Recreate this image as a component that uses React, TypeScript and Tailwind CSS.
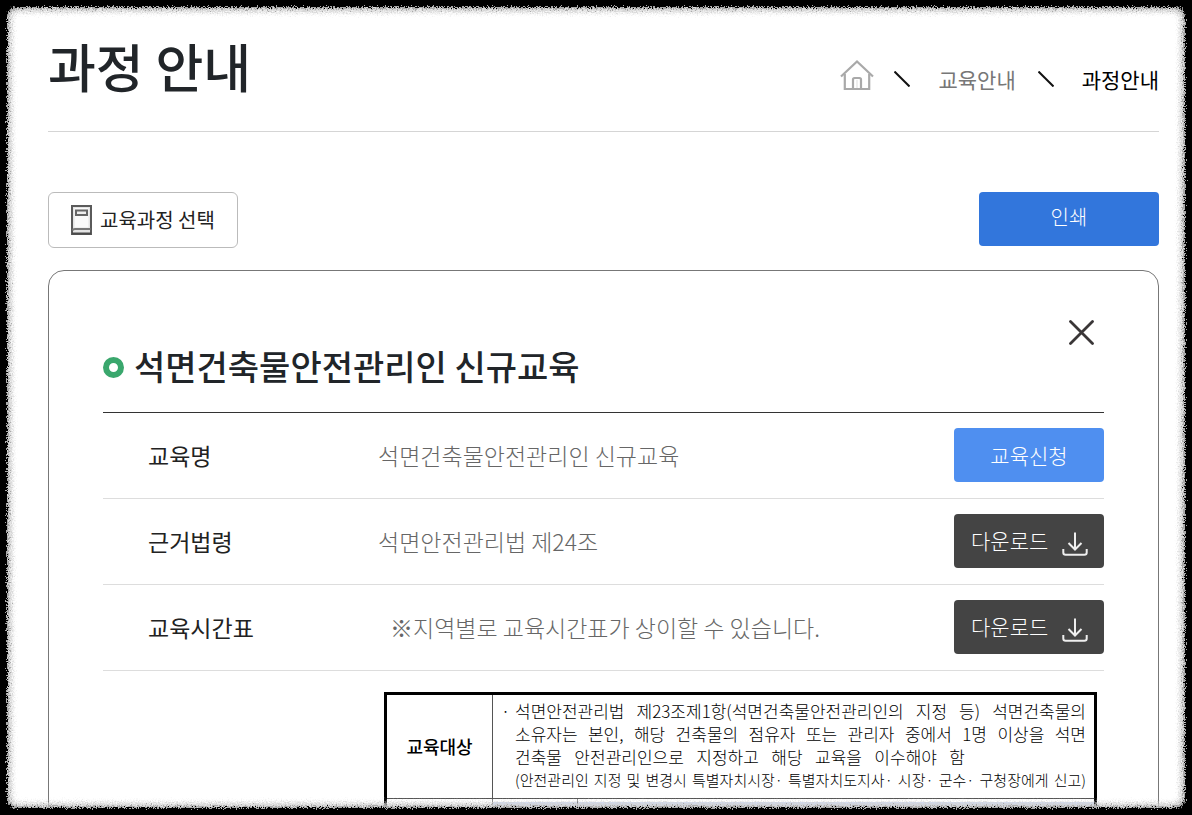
import React from "react";

function HomeIcon() {
  return (
    <svg width="34" height="32" viewBox="0 0 34 32" fill="none" stroke="#a9a9a9" strokeWidth="2.200">
      <path d="M1 17.500 L17 2.500 L33 17.500" />
      <path d="M4.800 15 V30 H29.200 V15" />
      <path d="M13 30 V20.500 Q13 19 14.500 19 H19.500 Q21 19 21 20.500 V30" />
      <path d="M17 21 V29" strokeWidth="1" opacity="0.4" />
    </svg>
  );
}

function Separator() {
  return (
    <svg width="16" height="16" viewBox="0 0 16 16" stroke="#111" strokeWidth="2" aria-hidden="true">
      <path d="M0.500 0.500 L15.500 15.500" />
    </svg>
  );
}

function BookIcon() {
  return (
    <svg width="21" height="30" viewBox="0 0 21 30" fill="none" aria-hidden="true">
      <rect x="1" y="1" width="19" height="28" fill="#e4e4e4" stroke="#5a5a5a" strokeWidth="2" />
      <rect x="3.500" y="3" width="14" height="19.500" fill="#fafafa" />
      <rect x="5" y="5.500" width="11" height="4.500" fill="#eee" stroke="#666" strokeWidth="2" />
      <path d="M1.500 25.500 Q2 24 4 24 H19.500" stroke="#777" strokeWidth="2" />
      <path d="M1 28.500 H20" stroke="#4a4a4a" strokeWidth="2" />
    </svg>
  );
}

function DownloadIcon() {
  return (
    <svg width="26" height="24" viewBox="0 0 26 24" fill="none" stroke="#eeeeee" strokeWidth="2" aria-hidden="true">
      <path d="M13 0.500 V17" />
      <path d="M6.500 11 L13 17.500 L19.500 11" />
      <path d="M1.300 17 V20.500 Q1.300 22.700 3.600 22.700 H22.400 Q24.700 22.700 24.700 20.500 V17" />
    </svg>
  );
}

function DownloadButton() {
  return (
    <button type="button" className="flex h-[54px] w-[150px] shrink-0 items-center rounded bg-[#444444] pr-4 pb-[2px] pl-[17px] text-[21px] leading-8 font-light text-white">
      <span className="flex-1 text-left whitespace-nowrap">다운로드</span>
      <span className="pt-2">
        <DownloadIcon />
      </span>
    </button>
  );
}

type RowProps = { label: string; children: React.ReactNode; indent?: boolean; action: React.ReactNode };

function Row({ label, children, indent, action }: RowProps) {
  return (
    <div className="flex items-center border-b border-[#dddddd] pt-[15px] pb-4">
      <dt className="w-[275px] shrink-0 pl-[45px] text-[23px] leading-8 text-[#222222]">{label}</dt>
      <dd className="flex flex-1 items-center justify-between text-[23px] leading-8 font-light text-[#666666]">
        <span className={indent ? "pl-3" : ""}>{children}</span>
        {action}
      </dd>
    </div>
  );
}

function PaperEdge() {
  return (
    <div className="pointer-events-none absolute inset-0 overflow-hidden" aria-hidden="true">
      <svg width="0" height="0" className="absolute">
        <filter id="rough" x="0" y="0" width="100%" height="100%">
          <feTurbulence type="fractalNoise" baseFrequency="0.8" numOctaves="2" seed="4" result="n" />
          <feDisplacementMap in="SourceGraphic" in2="n" scale="8" xChannelSelector="R" yChannelSelector="G" />
        </filter>
        <filter id="grain" x="0" y="0" width="100%" height="100%">
          <feTurbulence type="fractalNoise" baseFrequency="0.8" numOctaves="2" seed="9" result="n" />
          <feDisplacementMap in="SourceGraphic" in2="n" scale="10" xChannelSelector="R" yChannelSelector="G" />
        </filter>
      </svg>
      <div className="absolute -inset-5 rounded-[38px] border-[29px] border-[#aaaaaa] shadow-[inset_0_0_4px_3px_#d0d0d0] [filter:url(#grain)]" />
      <div className="absolute -inset-5 rounded-[36px] border-[27px] border-black [filter:url(#rough)]" />
    </div>
  );
}

export default function App() {
  return (
    <div className="relative h-screen overflow-hidden bg-white font-['Noto_Sans_CJK_KR','Noto_Sans',sans-serif]">
      <div className="pr-[33px] pl-12">
        <header className="flex h-[132px] items-center justify-between border-b border-[#d5d5d5] pb-1">
          <h1 className="pt-1 text-[52px] leading-[64px] font-medium text-[#212529]">과정 안내</h1>
          <nav className="flex items-center pt-[30px] text-[21px] leading-8">
            <a href="#home" aria-label="홈" className="pb-[7px]">
              <HomeIcon />
            </a>
            <span className="ml-5">
              <Separator />
            </span>
            <a href="#education" className="ml-7 text-[#777777]">
              교육안내
            </a>
            <span className="ml-[22px]">
              <Separator />
            </span>
            <a href="#course" className="ml-7 text-black">
              과정안내
            </a>
          </nav>
        </header>

        <div className="mt-[60px] flex items-start justify-between">
          <button type="button" className="flex h-14 w-[190px] items-center gap-2 rounded-md border border-[#bbbbbb] pl-[22px] text-[20px] leading-8 text-[#222222]">
            <BookIcon />
            교육과정 선택
          </button>
          <button type="button" className="h-[54px] w-[180px] rounded bg-[#3276dc] pb-1 text-[20px] leading-8 font-light text-white">
            인쇄
          </button>
        </div>

        <main className="mt-[22px] rounded-2xl border border-[#777777] px-[54px] pb-10">
          <div className="flex h-[142px] items-start justify-between border-b border-[#333333]">
            <h2 className="flex items-center gap-[10px] pt-[70px] text-[34px] leading-[50px] font-medium text-[#212529]">
              <span className="mt-[2px] size-[21px] rounded-full border-[6px] border-[#3aa76d]" />
              석면건축물안전관리인 신규교육
            </h2>
            <button type="button" aria-label="닫기" className="mt-[49px] mr-[10px]">
              <svg width="25" height="25" viewBox="0 0 25 25" stroke="#3a3637" strokeWidth="2.800" strokeLinecap="round">
                <path d="M1.500 1.500 L23.500 23.500 M23.500 1.500 L1.500 23.500" />
              </svg>
            </button>
          </div>

          <dl>
            <Row
              label="교육명"
              action={
                <button type="button" className="h-[54px] w-[150px] shrink-0 rounded bg-[#4f8ff0] text-[21px] leading-8 font-light text-white">
                  교육신청
                </button>
              }
            >
              석면건축물안전관리인 신규교육
            </Row>
            <Row label="근거법령" action={<DownloadButton />}>
              석면안전관리법 제24조
            </Row>
            <Row label="교육시간표" indent action={<DownloadButton />}>
              ※지역별로 교육시간표가 상이할 수 있습니다.
            </Row>
          </dl>

          <div className="pt-[21px] pr-[7px] pl-[281px]">
            <table className="w-full table-fixed border-collapse border-[3px] border-black text-[17px] leading-[23px] text-black">
              <colgroup>
                <col className="w-[107px]" />
                <col className="w-[85px]" />
                <col />
              </colgroup>
              <tbody>
                <tr>
                  <th scope="row" className="border-r border-b border-[#555555] text-center text-[18px] font-medium">
                    교육대상
                  </th>
                  <td colSpan={2} className="border-b border-[#555555] pt-1 pr-2 pb-[7px] pl-2 font-light">
                    <div className="flex">
                      <span className="w-[14px] shrink-0">·</span>
                      <div className="min-w-0 flex-1 whitespace-nowrap [text-align-last:justify]">
                        <p>석면안전관리법 제23조제1항(석면건축물안전관리인의 지정 등) 석면건축물의</p>
                        <p>소유자는 본인, 해당 건축물의 점유자 또는 관리자 중에서 1명 이상을 석면</p>
                        <p className="w-[450px]">건축물 안전관리인으로 지정하고 해당 교육을 이수해야 함</p>
                        <p className="text-[15px]">(안전관리인 지정 및 변경시 특별자치시장· 특별자치도지사· 시장· 군수· 구청장에게 신고)</p>
                      </div>
                    </div>
                  </td>
                </tr>
                <tr>
                  <td className="p-0">
                    <div className="h-10 border-t-[3px] border-white bg-white" />
                  </td>
                  <td className="border-x border-[#777777] p-0">
                    <div className="h-10 border-t-[3px] border-white bg-[#d3dcf2]" />
                  </td>
                  <td className="p-0">
                    <div className="h-10 border-t-[3px] border-white bg-[#d3dcf2]" />
                  </td>
                </tr>
              </tbody>
            </table>
          </div>
        </main>
      </div>
      <PaperEdge />
    </div>
  );
}
